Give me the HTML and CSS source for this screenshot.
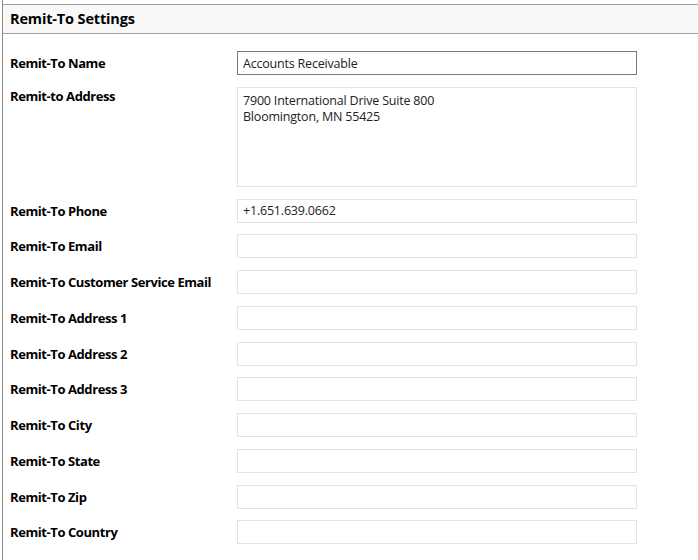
FILE: index.html
```html
<!DOCTYPE html>
<html>
<head>
<meta charset="utf-8">
<link rel="stylesheet" href="styles.css">
</head>
<body>
<div class="panel">
  <div class="header">Remit-To Settings</div>
  <div class="form">
    <div class="row"><label class="lbl">Remit-To Name</label><input class="field focus" type="text" value="Accounts Receivable"></div>
    <div class="row"><label class="lbl lbl-top">Remit-to Address</label><textarea class="field area">7900 International Drive Suite 800
Bloomington, MN 55425</textarea></div>
    <div class="row"><label class="lbl">Remit-To Phone</label><input class="field" type="text" value="+1.651.639.0662"></div>
    <div class="row"><label class="lbl">Remit-To Email</label><input class="field" type="text"></div>
    <div class="row"><label class="lbl">Remit-To Customer Service Email</label><input class="field" type="text"></div>
    <div class="row"><label class="lbl">Remit-To Address 1</label><input class="field" type="text"></div>
    <div class="row"><label class="lbl">Remit-To Address 2</label><input class="field" type="text"></div>
    <div class="row"><label class="lbl">Remit-To Address 3</label><input class="field" type="text"></div>
    <div class="row"><label class="lbl">Remit-To City</label><input class="field" type="text"></div>
    <div class="row"><label class="lbl">Remit-To State</label><input class="field" type="text"></div>
    <div class="row"><label class="lbl">Remit-To Zip</label><input class="field" type="text"></div>
    <div class="row"><label class="lbl">Remit-To Country</label><input class="field" type="text"></div>
  </div>
</div>
</body>
</html>
```
FILE: styles.css
```css
html, body {
  margin: 0;
  padding: 0;
  background: #ffffff;
}
body {
  font-family: "Open Sans", "Noto Sans", sans-serif;
  color: #000;
}
.panel {
  margin-left: 2px;
  border-left: 1px solid #8c8c8c;
  min-height: 560px;
  padding-top: 4px;
  box-sizing: border-box;
}
.header {
  height: 28px;
  border-top: 1px solid #a0a0a0;
  border-bottom: 1px solid #a0a0a0;
  background: #f8f8f8;
  padding-left: 7px;
  font-size: 14.5px;
  font-weight: 700;
  line-height: 28px;
  letter-spacing: -0.15px;
}
.form {
  padding-top: 17px;
  display: flex;
  flex-direction: column;
  gap: 11.78px;
}
.row {
  display: flex;
  align-items: flex-start;
}
.lbl {
  width: 227px;
  padding-left: 7px;
  padding-top: 3px;
  font-size: 13px;
  font-weight: 700;
  line-height: 18px;
  letter-spacing: -0.42px;
}
.lbl-top {
  padding-top: 0;
}
.field {
  box-sizing: border-box;
  width: 400px;
  height: 24px;
  margin: 0;
  border: 1px solid #e3e3e3;
  background: #fff;
  padding: 0 5px;
  font-family: "Open Sans", "Noto Sans", sans-serif;
  font-size: 12.5px;
  color: #222;
  letter-spacing: -0.2px;
  outline: none;
}
.field.focus {
  border-color: #7a7a7a;
}
.area {
  height: 100px;
  padding: 5px 5px;
  line-height: 16px;
  resize: none;
  overflow: hidden;
}
```
